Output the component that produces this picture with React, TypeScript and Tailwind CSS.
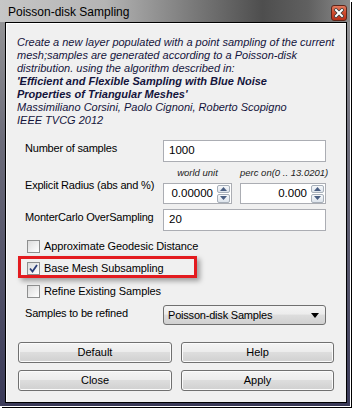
import React from 'react';

const ui = { fontFamily: '"Liberation Sans", Arial, sans-serif' };

function SpinArrows() {
  return (
    <div className="flex flex-col w-[13px] h-[18px] mr-[1px] gap-[1px]">
      {[0, 1].map((i) => (
        <div
          key={i}
          className="flex-1 flex items-center justify-center border border-[#a7afb9] rounded-[2px] bg-[linear-gradient(to_bottom,#f6f8fa,#dde4ec)]"
        >
          <svg width="7" height="4" viewBox="0 0 7 4">
            {i === 0 ? (
              <path d="M0 4 L3.5 0 L7 4 Z" fill="#4a5e82" />
            ) : (
              <path d="M0 0 L3.5 4 L7 0 Z" fill="#4a5e82" />
            )}
          </svg>
        </div>
      ))}
    </div>
  );
}

function SpinBox({ value, width }: { value: string; width: string }) {
  return (
    <div className={`${width} h-[21px] flex items-center border border-[#abadb3] bg-white`}>
      <span className="flex-1 text-right pr-[4px] text-[11.5px] text-black">{value}</span>
      <SpinArrows />
    </div>
  );
}

function CheckBox({ checked, label }: { checked?: boolean; label: string }) {
  return (
    <div className="flex items-center h-[22px] ml-[2px]">
      <div className="w-[13px] h-[13px] border border-[#8e8f8f] bg-[linear-gradient(135deg,#dcdcdc,#ffffff)] flex items-center justify-center">
        {checked && (
          <svg width="9" height="9" viewBox="0 0 9 9">
            <path d="M1 4.5 L3.5 7.5 L8 1" fill="none" stroke="#2b3d78" strokeWidth="1.8" />
          </svg>
        )}
      </div>
      <span className="ml-[4px] text-[11px] tracking-[-0.1px] text-black whitespace-nowrap">{label}</span>
    </div>
  );
}

function Button({ label }: { label: string }) {
  return (
    <div className="h-[21px] flex items-center justify-center border border-[#707070] rounded-[3px] bg-[linear-gradient(to_bottom,#f4f4f4_0%,#ececec_45%,#dddddd_50%,#d0d0d0_100%)] text-[11px] text-black shadow-[inset_0_0_0_1px_#fbfbfb]">
      {label}
    </div>
  );
}

export default function App() {
  return (
    <div className="w-[353px] h-[409px] bg-white" style={ui}>
      <div className="w-[350px] h-[406px] flex flex-col bg-[linear-gradient(to_bottom,#9a9a9a_0%,#6c6c7a_35%,#3a3a58_100%)] shadow-[1px_1px_0_0_#fff,2px_2px_0_0_#000]">
        {/* Title bar */}
        <div className="h-[22px] flex items-center justify-between pl-[8px] pr-[3px] bg-[linear-gradient(to_right,#c6c6c6_0%,#b4b4b4_30%,#7a7a7a_55%,#4e4e4e_75%,#606060_88%,#8a8a8a_100%)]">
          <span className="text-[12px] text-black pt-[2px]">Poisson-disk Sampling</span>
          <div className="w-[16px] h-[16px] mt-[4px] rounded-[3px] border border-[#5e2418] bg-[linear-gradient(to_bottom,#e27a5e_0%,#cf4a2c_50%,#b8301a_100%)] flex items-center justify-center">
            <svg width="10" height="10" viewBox="0 0 10 10">
              <path d="M2 2 L8 8 M8 2 L2 8" stroke="#3a3a3a" strokeWidth="3.6" strokeLinecap="square" />
              <path d="M2 2 L8 8 M8 2 L2 8" stroke="#ffffff" strokeWidth="2" strokeLinecap="square" />
            </svg>
          </div>
        </div>

        <div className="flex-1 flex pl-[5px] pr-[3px] pb-[3px]">
          <div className="relative flex-1 flex flex-col border border-black bg-[#f0f0f0] shadow-[inset_1px_1px_0_0_#ffffff]">
            {/* Description */}
            <div className="pl-[11px] pt-[13px] italic text-[11px] leading-[13px] text-[#14143c] whitespace-nowrap">
              <div>Create a new layer populated with a point sampling of the current</div>
              <div>mesh;samples are generated according to a Poisson-disk</div>
              <div>distribution. using the algorithm described in:</div>
              <div className="font-bold">'Efficient and Flexible Sampling with Blue Noise</div>
              <div className="font-bold">Properties of Triangular Meshes'</div>
              <div>Massimiliano Corsini, Paolo Cignoni, Roberto Scopigno</div>
              <div>IEEE TVCG 2012</div>
            </div>

            {/* Form */}
            <div className="pl-[19px] mt-[13px] text-[11px] tracking-[-0.2px] text-black whitespace-nowrap">
              <div className="flex items-start h-[22px]">
                <span className="w-[138px] leading-[16px]">Number of samples</span>
                <div className="w-[163px] h-[22px] flex items-center pl-[5px] border border-[#abadb3] bg-white text-[11.5px] tracking-normal">1000</div>
              </div>

              <div className="flex items-center mt-[3px]">
                <span className="w-[138px] leading-[16px]">Explicit Radius (abs and %)</span>
                <div className="flex flex-col">
                  <div className="flex h-[16px] items-center italic text-[9.5px] tracking-normal text-[#222]">
                    <span className="w-[69px] text-center">world unit</span>
                    <span className="w-[86px] ml-[8px] text-center">perc on(0 .. 13.0201)</span>
                  </div>
                  <div className="flex mt-[2px] gap-[8px] tracking-normal">
                    <SpinBox value="0.00000" width="w-[69px]" />
                    <SpinBox value="0.000" width="w-[86px]" />
                  </div>
                </div>
              </div>

              <div className="flex items-start h-[22px] mt-[5px]">
                <span className="w-[138px] leading-[16px]">MonterCarlo OverSampling</span>
                <div className="w-[163px] h-[22px] flex items-center pl-[5px] border border-[#abadb3] bg-white text-[11.5px] tracking-normal">20</div>
              </div>

              <div className="mt-[4px]">
                <CheckBox label="Approximate Geodesic Distance" />
                <CheckBox checked label="Base Mesh Subsampling" />
                <div className="mt-[1px]">
                  <CheckBox label="Refine Existing Samples" />
                </div>
              </div>

              <div className="flex items-start h-[20px] mt-[3px]">
                <span className="w-[138px] leading-[16px]">Samples to be refined</span>
                <div className="w-[163px] h-[20px] flex items-center justify-between pl-[4px] pr-[6px] border border-[#707070] rounded-[3px] bg-[linear-gradient(to_bottom,#f4f4f4_0%,#ececec_45%,#dddddd_50%,#d0d0d0_100%)]">
                  <span>Poisson-disk Samples</span>
                  <svg width="8" height="5" viewBox="0 0 8 5">
                    <path d="M0 0 L8 0 L4 5 Z" fill="#000" />
                  </svg>
                </div>
              </div>
            </div>

            {/* Buttons */}
            <div className="grid grid-cols-[154px_153px] gap-x-[9px] gap-y-[7px] pl-[12px] mt-[17px]">
              <Button label="Default" />
              <Button label="Help" />
              <Button label="Close" />
              <Button label="Apply" />
            </div>

            {/* Highlight annotation */}
            <div className="absolute left-[12px] top-[233px] w-[179px] h-[22px] border-[3px] border-[#e31b1f] shadow-[3px_3px_5px_rgba(0,0,0,0.35)]" />
          </div>
        </div>
      </div>
    </div>
  );
}
